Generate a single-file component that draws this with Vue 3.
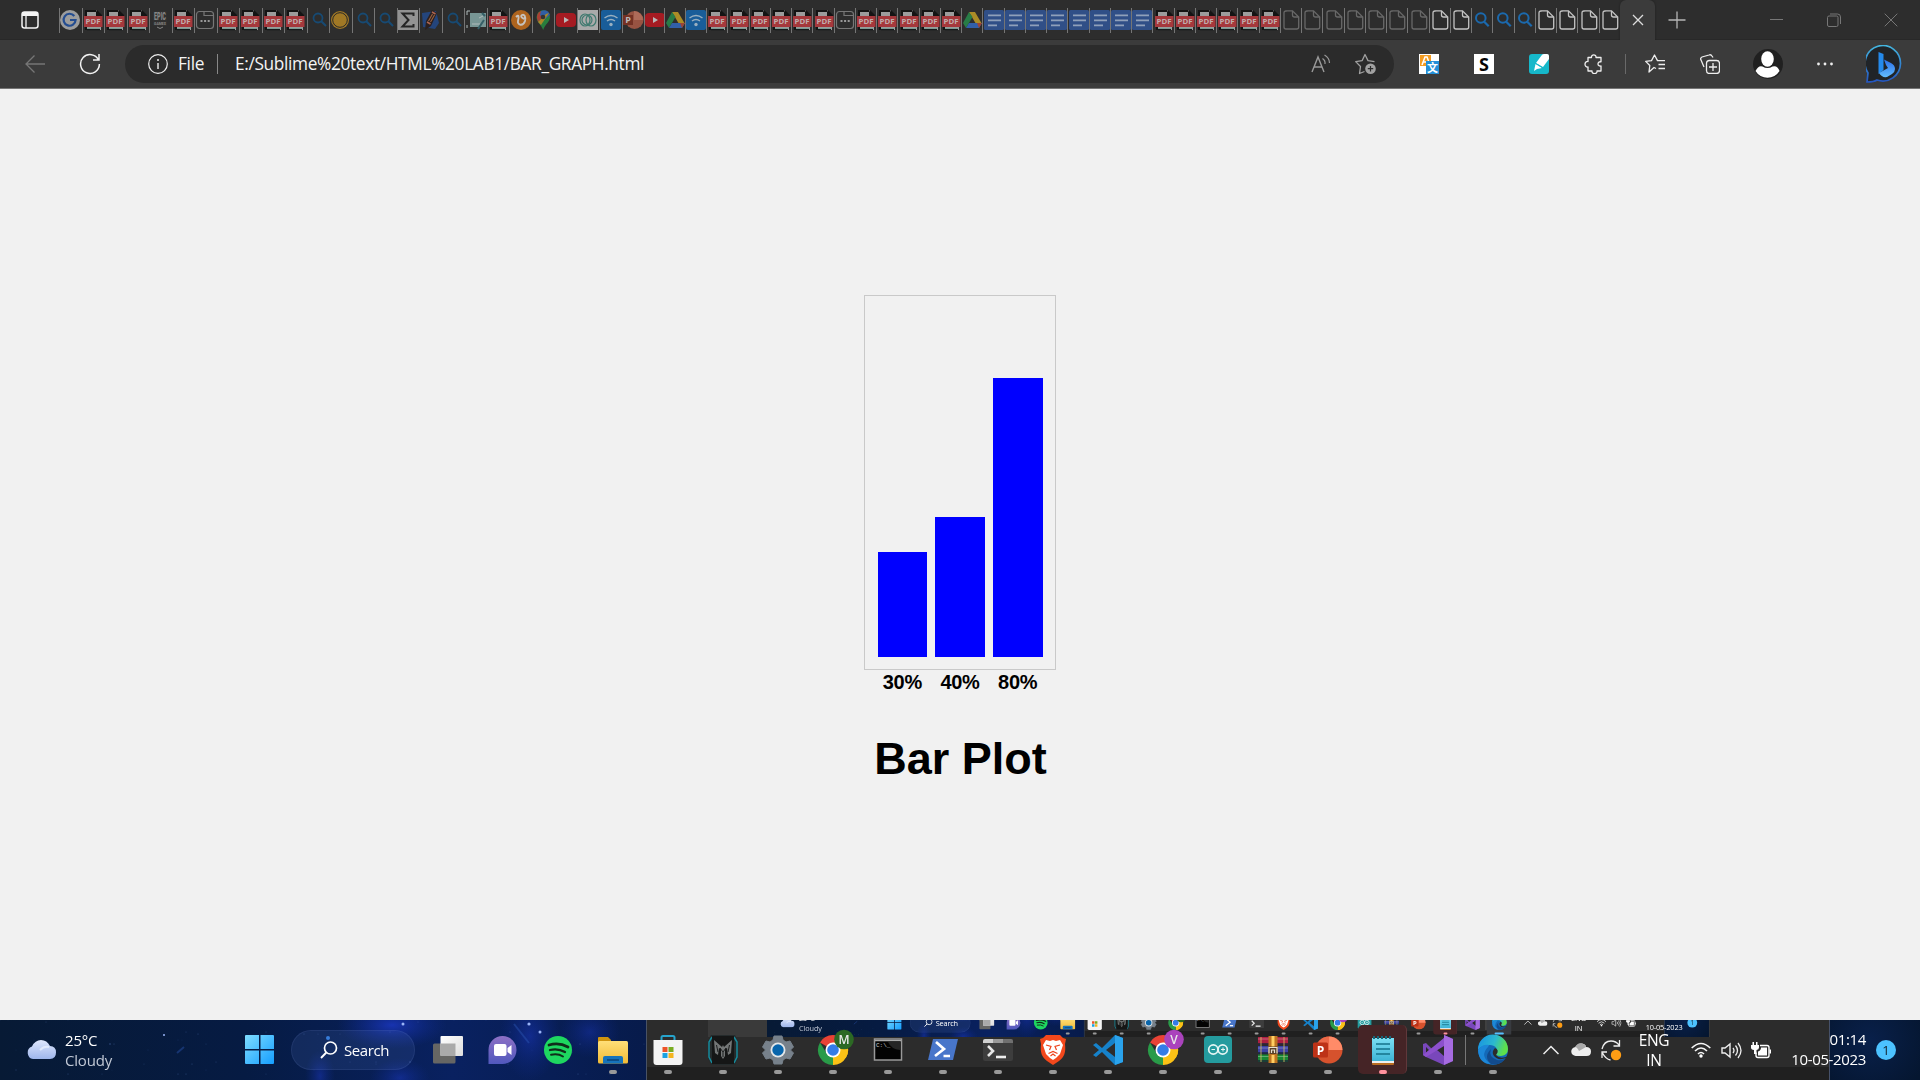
<script setup>
const icons = {
  pdf: '<path d="M3 0h10l5 5v15H3z" fill="#9c9c9c"/><path d="M2 0h11v2H4v18H2zM14 0l5 5v3h-2V6h-4V2z" fill="#141414"/><path d="M4 19.500h13" stroke="#15191b" stroke-width="1.500"/><path d="M4 18.300h13" stroke="#81aaa0" stroke-width=".8"/><rect x="1" y="6" width="18.500" height="11" fill="#a5383c"/><text x="2.600" y="14.200" textLength="15" lengthAdjust="spacingAndGlyphs" font-family="Open Sans,sans-serif" font-weight="700" font-size="7.500" fill="#c0adad">PDF</text>',
  google: '<circle cx="10" cy="10" r="10" fill="#9d9d9d"/><path d="M14.3 6A6 6 0 1 0 15.6 10H10" fill="none" stroke="#244d91" stroke-width="2.2"/>',
  epic: '<rect x="3" y="1" width="14" height="15" rx="1" fill="#303030"/><text x="4" y="10.300" textLength="12" lengthAdjust="spacingAndGlyphs" font-family="Roboto,sans-serif" font-weight="900" font-size="10.500" fill="#858585">EPIC</text><text x="4" y="15" textLength="12" lengthAdjust="spacingAndGlyphs" font-family="Roboto,sans-serif" font-weight="700" font-size="4" fill="#858585">GAMES</text><path d="M7 17l3 1.500 3-1.500" stroke="#858585" fill="none"/>',
  window: '<rect x="1.5" y="1.5" width="17" height="17" rx="3" fill="none" stroke="#777" stroke-width="1.2"/><path d="M9 2v3.5h9" fill="none" stroke="#777" stroke-width="1.2"/><path d="M5.5 11h2m1.6 0h2m1.6 0h2" stroke="#999" stroke-width="2"/>',
  search: '<circle cx="10" cy="8" r="4.5" fill="none" stroke="#174a73" stroke-width="1.8"/><path d="M13.3 11.3l4.7 4.7" stroke="#174a73" stroke-width="2"/>',
  searchOn: '<circle cx="8.8" cy="8" r="4.800" fill="none" stroke="#1b69ad" stroke-width="2"/><path d="M12.2 11.7l4.5 4.5" stroke="#1b69ad" stroke-width="2.200"/>',
  gold: '<circle cx="10" cy="10" r="9" fill="#a07825"/><circle cx="10" cy="10" r="7.300" fill="none" stroke="#282828" stroke-width="1"/>',
  sigma: '<path d="M0 0h20v20H0z" fill="#929292"/><path d="M15.500 6V3.500H4.500l6 6.500-6 6.500h11V14" fill="none" stroke="#252525" stroke-width="2"/>',
  pencil: '<path d="M1 3l14-2 3 12-4 6-12-2z" fill="#24457c"/><path d="M11 0l5 3-6 13-6 4 1-9z" fill="#2b2020"/><path d="M11 2l3.500 2M6 12l3.500 2" stroke="#ac6550" stroke-width="1.500"/><path d="M7.500 11l4-7M9.500 12l4-7" stroke="#9c6340" stroke-width="1.100"/>',
  teal: '<path d="M4 3h16v14H4z" fill="#789695"/><path d="M1 5V1h3M1 18v-3M6 14h8M13 8l4-2" stroke="#b0bbbb" fill="none"/><path d="M12 19l6-9M16 3l3 3" stroke="#355f67" stroke-width="2"/>',
  orange: '<circle cx="10" cy="10" r="10" fill="#ae641e"/><path d="M5 7c3-3 3 0 2 4s5 6 7 0c1-5-1-7-3-6s0 4 4 4" fill="none" stroke="#c7c3bf" stroke-width="1.9"/>',
  map: '<path d="M3.5 7A6.7 6.7 0 0 1 17 7c0 5-5 7-6.8 13C8.5 15 3.5 12 3.5 7z" fill="#287d3d"/><path d="M4 8A7 7 0 0 1 8 1l3 5-6 6z" fill="#a94035"/><path d="M8 1c4-2 8 0 9 4l-6 5-4-5z" fill="#315fa5"/><path d="M5 12l8-8 3-1-8 12z" fill="#a88528"/><circle cx="10" cy="7" r="2.3" fill="#343434"/>',
  yt: '<rect x="0" y="3" width="20" height="14" rx="4" fill="#a51b22"/><path d="M8 7l5 3-5 3z" fill="#b8b8b8"/>',
  rings: '<path d="M0 0h20v20H0z" fill="#aaa"/><g fill="none" stroke="#407a70" stroke-width="1.2"><ellipse cx="7" cy="10" rx="5" ry="6"/><ellipse cx="13" cy="10" rx="5" ry="6"/><ellipse cx="9" cy="10" rx="5" ry="5"/></g>',
  wifi: '<rect width="20" height="20" rx="2" fill="#195d99"/><path d="M3.5 8q6.5-5 13 0M6 11q4-3 8 0" fill="none" stroke="#9ab0c0" stroke-width="1.4"/><circle cx="10" cy="14.5" r="1.7" fill="#9ab0c0"/>',
  pptDim: '<circle cx="11.5" cy="10" r="9" fill="#985342"/><path d="M11 1a9 9 0 0 1 9 9h-9z" fill="#ae6b59"/><rect y="5" width="10" height="10" fill="#743124"/><text x="5" y="13" text-anchor="middle" font-size="9" font-family="Open Sans,sans-serif" font-weight="700" fill="#bbb">P</text>',
  drive: '<path d="M7 2h6l7 12h-6z" fill="#ab8c26"/><path d="M7 2l3.5 5L4 18 1 13z" fill="#287c46"/><path d="M4 18l3-5h13l-3 5z" fill="#315fa8"/><path d="M15 13h5l-3 5z" fill="#9d4434"/>',
  docs: '<rect width="20" height="20" rx="1.5" fill="#304f87"/><path d="M4 5.3h13M4 10.3h13M4 15.3h9" stroke="#8fa0ba" stroke-width="1.8"/>',
  page: '<path d="M5 .9h6.5l6.2 6.2V17q0 2-2 2H5q-2 0-2-2V3q0-2 2-2z" fill="none" stroke="#686868" stroke-width="1.3"/><path d="M11.5 1v4q0 2 2 2h4" fill="none" stroke="#686868" stroke-width="1.3"/>',
}
icons.pageOn = icons.page.replaceAll('#686868', '#c3c3c3')

const rep = (n, k) => Array(n).fill(k)
const tabs = [
  'google', ...rep(3, 'pdf'), 'epic', 'pdf', 'window', ...rep(4, 'pdf'), 'search', 'gold', 'search', 'search', 'sigma', 'pencil', 'search', 'teal', 'pdf', 'orange', 'map', 'yt', 'rings', 'wifi', 'pptDim',
  'yt', 'drive', 'wifi', ...rep(6, 'pdf'), 'window', ...rep(5, 'pdf'), 'drive', ...rep(8, 'docs'), ...rep(6, 'pdf'), ...rep(7, 'page'), 'pageOn', 'pageOn', ...rep(3, 'searchOn'), ...rep(4, 'pageOn'),
]
const tabClass = (i) => (i < 26 ? 'wide' : i === 26 ? 'narrow' : '')

const chrome = (l, c) =>
  `<path d="M15 15L2 7.5A15 15 0 0 1 28 7.5z" fill="#e94235"/><path d="M15 15L28 7.5A15 15 0 0 1 15 30z" fill="#fbc116"/><path d="M15 30A15 15 0 0 1 2 7.5L9 19l6 1z" fill="#299b48"/><path d="M15 7.5h13a15 15 0 0 1 0 15L15 30l6.5-11z" fill="#fbc116"/><circle cx="15" cy="15" r="7.5" fill="#fff"/><circle cx="15" cy="15" r="5.8" fill="#347ce8"/><circle cx="26" cy="4.5" r="9.8" fill="${c}"/><text x="26" y="8.700" text-anchor="middle" font-family="Open Sans,sans-serif" font-weight="600" font-size="12" fill="#e8e8e8">${l}</text>`

const apps = [
  { n: 'task', idle: 1, s: '<defs><linearGradient id="tv" x2="1" y2="1"><stop stop-color="#fff"/><stop offset="1" stop-color="#ddd"/></linearGradient></defs><rect y="8.5" width="22.5" height="20" rx="1.5" fill="#666664"/><rect x="7.5" y="1" width="22.5" height="20" rx="1" fill="url(#tv)"/><path d="M7.5 8.5h15V21h-15z" fill="#aaa"/>' },
  { n: 'chat', idle: 1, s: '<defs><linearGradient id="ch" x2="0" y2="1"><stop stop-color="#8d70c5"/><stop offset="1" stop-color="#5058bd"/></linearGradient></defs><path d="M.5 29V15A14 14 0 1 1 14 29z" fill="url(#ch)"/><rect x="6" y="9" width="12.5" height="12" rx="2" fill="#fff"/><path d="M19.500 13l4-3v10l-4-3z" fill="#fff"/>' },
  { n: 'spotify', idle: 1, s: '<circle cx="15" cy="15" r="14" fill="#1ed760"/><path d="M6 10q10-3 19 2" stroke="#102d1a" stroke-width="2.7" fill="none" stroke-linecap="round"/><path d="M7 15q8-2 15 2" stroke="#102d1a" stroke-width="2.3" fill="none" stroke-linecap="round"/><path d="M8 19.8q7-1.5 12 1.7" stroke="#102d1a" stroke-width="1.9" fill="none" stroke-linecap="round"/>' },
  { n: 'files', s: '<defs><linearGradient id="fo" x2="0" y2="1"><stop stop-color="#ffdf78"/><stop offset="1" stop-color="#f2bb36"/></linearGradient></defs><path d="M0 3q0-1 1-1h9l3 3v6H0z" fill="#cf940e"/><rect y="6" width="30" height="22.5" rx="1.5" fill="url(#fo)"/><path d="M5 28.5V23q0-2 2-2h16q2 0 2 2v5.500z" fill="#1673bb"/><path d="M9 25h12" stroke="#0a4278" stroke-width="1.5"/>' },
  { n: 'store', s: '<path d="M8.500 6V2.500q0-1.500 1.500-1.500h10q1.500 0 1.500 1.500V6" fill="none" stroke="#26a4cd" stroke-width="2"/><path d="M.5 5h29v22q0 3-3 3h-23q-3 0-3-3z" fill="#f4f4f4"/><path d="M9.500 12H14.500v5h-5z" fill="#ed5428"/><path d="M15.500 12h5v5h-5z" fill="#79ad22"/><path d="M9.500 18h5v5h-5z" fill="#1ba2e2"/><path d="M15.500 18h5v5h-5z" fill="#f4b51f"/>' },
  { n: 'predator', s: '<path d="M3 0h24l3 6v17l-3 7H3l-3-7V6z" fill="#252b2c"/><path d="M4 2L1 7v15l3 6M26 2l3 5v15l-3 6" fill="none" stroke="#168b9c" stroke-width="1.500"/><path d="M4 1h22v28H4z" fill="#151616"/><path d="M6 5l8 7 1-2 1 2 8-7-1 13-3 2-1-7-2 1v7l-2 3-2-3v-7l-2-1-1 7-3-2z" fill="#737676"/><path d="M8.500 10l1.500 7M21.500 10L20 17M12 13l3 4 3-4M15 17v5" stroke="#1b1d1d" stroke-width="1" fill="none"/>' },
  { n: 'settings', s: '<path d="M11 1h8l1 4 3 2 4-1 3.500 6-3 3 3 3-3.500 6-4-1-3 2-1 4h-8l-1-4-3-2-4 1-3.500-6 3-3-3-3 3.500-6 4 1 3-2z" fill="#77818b" stroke="#77818b" stroke-linejoin="round"/><circle cx="15" cy="15" r="7.500" fill="#e4e7e9"/><circle cx="15" cy="15" r="5.700" fill="#0865ac"/>' },
  { n: 'chromeM', s: chrome('M', '#2c6924') },
  { n: 'cmd', s: '<rect x="1.500" y="4" width="27" height="21" fill="#030303" stroke="#999" stroke-width="1.500"/><path d="M2 5.500h26" stroke="#aaa" stroke-width="1.500"/><path d="M15 7h12v8q-9-1-12-8" fill="#252525"/><text x="3" y="11.500" font-family="Liberation Mono,monospace" font-size="6" fill="#ccc">C:\\_</text>' },
  { n: 'powershell', s: '<path d="M5 4h25l-5 21H0z" fill="#4876ca"/><path d="M8 7l8 7-9 7" fill="none" stroke="#fff" stroke-width="2.700"/><path d="M15.500 21H22" stroke="#fff" stroke-width="2.500"/>' },
  { n: 'terminal', s: '<rect y="4" width="30" height="22" rx="2" fill="#3d3d3d"/><path d="M0 8V6q0-2 2-2h8v4z" fill="#d0d0d0"/><path d="M10 4h10v4H10z" fill="#999"/><path d="M20 4h8q2 0 2 2v2H20z" fill="#707070"/><path d="M5 11l5 5-5 5" fill="none" stroke="#e7e7e7" stroke-width="2.600"/><path d="M13 22h10" stroke="#eee" stroke-width="2.600"/>' },
  { n: 'brave', s: '<path d="M8 0h14l3 3 3 1-1 5c1 9-1 13-6 17l-6 4-6-4C4 22 2 18 3 9L2 4l3-1z" fill="#f3481c"/><path d="M8 5l4 1 3-1 3 1 4-1 3 5-3 9-4 4-3 2-3-2-4-4-3-9z" fill="#fff"/><path d="M8 10l5 1.500-1.500 3.500M22 10l-5 1.500 1.500 3.500M10.500 18.500l4.500-2 4.500 2M12.500 21l2.500-2 2.500 2" fill="none" stroke="#ed421b" stroke-width="1.200"/>' },
  { n: 'code', s: '<path d="M22 0l8 3v24l-8 3L9 17l-6 5-3-2 6-5-6-5 3-2 6 5z" fill="#1682ca"/><path d="M22 0l8 3v24l-8 3z" fill="#2aa3ec"/><path d="M22 8l-9 7 9 7z" fill="#2d2d2d"/>' },
  { n: 'chromeV', s: chrome('V', '#aa43bc') },
  { n: 'arduino', s: '<rect x="1" y="1" width="28" height="27" rx="4" fill="#249b9e"/><g fill="none" stroke="#e5f5f4" stroke-width="1.700"><circle cx="10.300" cy="14.500" r="4.600"/><circle cx="19.700" cy="14.500" r="4.600"/></g><path d="M8.500 14.500h3.500M18 14.500h4M20 12.500v4" stroke="#e5f5f4"/>' },
  { n: 'winrar', s: '<path d="M0 2h30v7.500H0z" fill="#ad2042"/><path d="M0 11h30v7.500H0z" fill="#3c41a5"/><path d="M0 19.500h30V27H0z" fill="#188834"/><path d="M0 4h30M0 13h30M0 21.500h30" stroke="#fff" opacity=".3"/><path d="M0 9h30M0 18h30M0 26h30" stroke="#1b2639" stroke-width="1.300"/><path d="M3 2v25M26 2v25" stroke="#d9bd62" stroke-width="1.500" opacity=".55"/><rect x="10.500" y="1" width="9" height="27" fill="#bd7321"/><path d="M15 1v11M15 20v8" stroke="#ffce62" stroke-width="3"/><rect x="10.500" y="11.500" width="9" height="7.500" fill="#594128"/><path d="M11 18.500v-6h8v6M13.500 18v-3h3v3" fill="none" stroke="#e8e0d0" stroke-width="1.200"/>' },
  { n: 'powerpoint', s: '<circle cx="16" cy="15" r="13.500" fill="#d6522d"/><path d="M16 1.500A13.500 13.500 0 0 1 29.500 15H16z" fill="#ff8b68"/><path d="M2.500 15A13.500 13.500 0 0 1 16 1.500V15z" fill="#ec6948"/><rect y="7.500" width="15" height="15" rx="1.500" fill="#bd3217"/><text x="7.500" y="19.500" text-anchor="middle" font-family="Open Sans,sans-serif" font-weight="700" font-size="12" fill="#fff">P</text>' },
  { n: 'notepad', hot: 1, s: '<defs><linearGradient id="np" x2="0" y2="1"><stop stop-color="#7bdff3"/><stop offset="1" stop-color="#3eb4d5"/></linearGradient></defs><rect x="4" y="26" width="22" height="4" rx="1" fill="#b86c21"/><path d="M4 3h22v25H4z" fill="#eee"/><path d="M4 3h22v23H4z" fill="url(#np)"/><path d="M8 9h14M8 14h14M8 19h14" stroke="#14738a" stroke-width="1.700"/><path d="M6 1v3M10 1v3M14 1v3M18 1v3M22 1v3" stroke="#176679" stroke-width="2"/>' },
  { n: 'studio', s: '<path d="M21 0l9 4v22l-9 4L3 22 0 20V9l3-1 7 7 11-12z" fill="#7947bb"/><path d="M21 0l9 4v22l-9 4z" fill="#a66be1"/><path d="M3 12v6l3-3zM21 9l-7 6 7 6z" fill="#2b2b2b"/><path d="M0 20l21-17v8L3 22z" fill="#8c50cc"/>' },
]
const edge = '<defs><linearGradient id="ed" x2="1" y2=".3"><stop stop-color="#178fe4"/><stop offset=".6" stop-color="#2cb9cf"/><stop offset="1" stop-color="#5ee04b"/></linearGradient></defs><circle cx="15" cy="15" r="15" fill="#1469b7"/><path d="M0 15A15 15 0 0 1 30 14q0 6-7 7-6 0-5-3c3-4-1-8-6-8Q3 10 0 15z" fill="url(#ed)"/><path d="M10 12q-9 9 3 17Q1 29 0 15q4-6 11-5z" fill="#1c87d8"/><path d="M13 14q-3 8 6 11 5 1 9-2-6 8-15 6-8-7 0-15z" fill="#124b8d"/><path d="M17 13q5 2 1 7 3 4 10 2l2-1-2 2q-8 3-12-2-3-4 1-8z" fill="#2b2b2b"/>'

const stars = Array.from({ length: 60 }, (_, i) => ({ x: (i * 137 + i * i * 11) % 646, y: (i * 23 + i * i * 7) % 60, r: i % 13 === 0 ? 0.8 : 0.5, o: 0.12 + (i % 5) * 0.08 }))
const bars = [
  { v: 30, h: 105, w: 49 },
  { v: 40, h: 140, w: 50 },
  { v: 80, h: 279, w: 50 },
]
</script>

<template>
  <div class="screen">
    <header class="tabstrip">
      <svg class="workspace" width="18" height="18" viewBox="0 0 18 18"><rect x="1" y="1" width="16" height="16" rx="2.500" fill="none" stroke="#f4f4f4" stroke-width="1.500" /><path d="M1 5V3q0-2 2-2h12q2 0 2 2v2z" fill="#f4f4f4" /><path d="M5 4v13" stroke="#f4f4f4" stroke-width="1.300" /></svg>
      <div class="tabs">
        <div v-for="(t, i) in tabs" :key="i" class="tab" :class="tabClass(i)"><svg width="20" height="20" viewBox="0 0 20 20" v-html="icons[t]"></svg></div>
      </div>
      <div class="active-tab"><svg width="12" height="12" viewBox="0 0 12 12"><path d="M1 1l10 10M11 1L1 11" stroke="#ddd" stroke-width="1.300" /></svg></div>
      <svg class="newtab" width="18" height="18" viewBox="0 0 18 18"><path d="M9 .5v17M.5 9h17" stroke="#b5b5b5" stroke-width="1.300" /></svg>
      <div class="wincontrols">
        <svg width="14" height="14" viewBox="0 0 14 14"><path d="M0 6.500h13" stroke="#777" /></svg>
        <svg width="14" height="14" viewBox="0 0 14 14"><rect x=".5" y="3" width="10.500" height="10.500" rx="1.500" fill="none" stroke="#777" /><path d="M3 1h7.500q3 0 3 3v7" fill="none" stroke="#777" /></svg>
        <svg width="14" height="14" viewBox="0 0 14 14"><path d="M.7.7l12.600 12.600M13.300.7L.7 13.300" stroke="#777" /></svg>
      </div>
    </header>

    <nav class="toolbar">
      <svg class="back" width="20" height="18" viewBox="0 0 20 18"><path d="M20 9H1M9.500.5L1 9l8.500 8.500" fill="none" stroke="#767676" stroke-width="1.300" /></svg>
      <svg class="reload" width="22" height="22" viewBox="0 0 22 22"><path d="M19.500 7A9.400 9.400 0 1 0 20.400 11M20 1v6h-6" fill="none" stroke="#f2f2f2" stroke-width="1.500" /></svg>
      <div class="address">
        <svg class="info" width="20" height="20" viewBox="0 0 20 20"><circle cx="10" cy="10" r="9.300" fill="none" stroke="#eee" stroke-width="1.200" /><path d="M10 9v6" stroke="#eee" stroke-width="1.400" /><circle cx="10" cy="6" r="1" fill="#eee" /></svg>
        <span class="scheme">File</span><i class="rule"></i><span class="url">E:/Sublime%20text/HTML%20LAB1/BAR_GRAPH.html</span>
        <svg class="read" width="20" height="20" viewBox="0 0 20 20"><path d="M1 18L7 3l6 15M3 13h8" fill="none" stroke="#999" stroke-width="1.400" /><path d="M11.500 4.500q3 2 2.500 5.500M13.500 1q5 3 5 8" fill="none" stroke="#999" stroke-width="1.200" /></svg>
        <svg class="fav" width="22" height="22" viewBox="0 0 22 22"><path d="M9.500 18.500l-5 2 1-7L.7 8.600l6.500-1L10 1.500l3 6.100 6.500 1" fill="none" stroke="#a1a1a1" stroke-width="1.300" stroke-linejoin="round" /><circle cx="15.500" cy="15.700" r="5.300" fill="#a1a1a1" /><path d="M15.500 13v5.500M12.800 15.700h5.400" stroke="#2b2b2b" stroke-width="1.200" /></svg>
      </div>
      <div class="extensions">
        <svg width="20" height="20" viewBox="0 0 20 20"><path d="M0 0h20v20H0z" fill="#fff" /><path d="M1 1h11v11H1z" fill="#f39b20" /><path d="M3 11l3-8h2l3 8M4 8h6" fill="none" stroke="#fff" stroke-width="1.500" /><path d="M7 7h13v13H7z" fill="#238fd7" /><text x="13.500" y="17.500" text-anchor="middle" font-family="Noto Sans CJK SC,sans-serif" font-weight="700" font-size="11" fill="#fff">文</text></svg>
        <svg width="20" height="20" viewBox="0 0 20 20"><path d="M0 0h20v20H0z" fill="#fff" /><text x="10" y="16.500" text-anchor="middle" font-family="Noto Sans,sans-serif" font-weight="700" font-size="18" fill="#050505">S</text></svg>
        <svg width="20" height="20" viewBox="0 0 20 20"><rect width="20" height="20" rx="3" fill="#16b8ca" /><path d="M12.500 1.500Q13 0 15 0h3q2 0 2 2v3l-6 8-7-4z" fill="#fff" /><path d="M6.500 10l6.500 4-5 1-3 2z" fill="#fff" /><path d="M6 9l8 5" stroke="#16b8ca" stroke-width=".8" /></svg>
        <svg width="20" height="20" viewBox="0 0 20 20"><path d="M4 3.500h3.500c-.5-3.500 5-3.500 4.500 0h5v4.300c-4-.7-4 4.900 0 4.200v5h-4c.5 3.500-5.500 3.500-5 0H4v-4c-4 .5-4-6 0-5.500z" fill="none" stroke="#eee" stroke-width="1.300" stroke-linejoin="round" /></svg>
      </div>
      <i class="divider"></i>
      <div class="actions">
        <svg width="21" height="20" viewBox="0 0 21 20"><path d="M11 14.500l-2-1-5 4.500.8-6.500L.7 7.400l5.800-.8L9.500 1l3 5.600H20M13.500 10.500H20M13.500 14.500H20" fill="none" stroke="#eee" stroke-width="1.300" stroke-linejoin="round" /></svg>
        <svg width="20" height="20" viewBox="0 0 20 20"><rect x="6.500" y="6.500" width="13" height="13" rx="3" fill="none" stroke="#eee" stroke-width="1.300" /><path d="M13 9v8M9 13h8M4 13L1 6q-1-2 1-3L9 1q2-.8 3 1l1 1.500" fill="none" stroke="#eee" stroke-width="1.300" /></svg>
        <svg class="profile" width="30" height="30" viewBox="0 0 30 30"><circle cx="15" cy="15" r="15" fill="#202020" /><ellipse cx="14.500" cy="10" rx="6.300" ry="7.700" fill="#fff" /><path d="M2.500 22q3-6 7-4.500 5 3 10 0 5-1.500 7 4.500a14 14 0 0 1-24 0z" fill="#fff" /></svg>
        <svg width="18" height="6" viewBox="0 0 18 6"><g fill="#eee"><circle cx="2.500" cy="3" r="1.400" /><circle cx="9" cy="3" r="1.400" /><circle cx="15.500" cy="3" r="1.400" /></g></svg>
        <svg class="bing" width="38" height="38" viewBox="0 0 38 38"><defs><linearGradient id="bingline" x2="0" y2="1"><stop stop-color="#44b6df" /><stop offset="1" stop-color="#2455bf" /></linearGradient><linearGradient id="bingb" x2="0" y2="1"><stop stop-color="#2b6fe8" /><stop offset="1" stop-color="#62bcff" /></linearGradient></defs><path d="M1 37l1-9a17.700 17.700 0 1 1 9 7q-3 2-10 2z" fill="#202428" stroke="url(#bingline)" stroke-width="1.700" /><path d="M12.500 7l5 2v16l-5 4z" fill="#248aec" /><path d="M18 14.500l7 3.500q4 2 4 6 0 3-3 5l-5 3q-5 1-8-4l9-5-2-3z" fill="url(#bingb)" /></svg>
      </div>
    </nav>

    <main class="page">
      <div class="chart">
        <div v-for="b in bars" :key="b.v" class="bar" :style="{ height: b.h + 'px', width: b.w + 'px' }"></div>
      </div>
      <div class="labels"><span v-for="b in bars" :key="b.v">{{ b.v }}%</span></div>
      <h1>Bar Plot</h1>
    </main>

    <footer class="dock">
      <div v-for="kind in ['main', 'mini']" :key="kind" class="clip" :class="kind">
        <div class="taskbar">
          <svg class="sky" width="646" height="60" viewBox="0 0 646 60">
            <defs>
              <linearGradient id="skyfill"><stop stop-color="#071a35" /><stop offset=".38" stop-color="#061b43" /><stop offset=".7" stop-color="#092160" /><stop offset="1" stop-color="#071b4b" /></linearGradient>
              <radialGradient id="glow"><stop stop-color="#203ee0" stop-opacity=".65" /><stop offset="1" stop-color="#1230ad" stop-opacity="0" /></radialGradient>
            </defs>
            <path d="M0 0h646v60H0z" fill="url(#skyfill)" />
            <ellipse cx="392" cy="5" rx="55" ry="24" fill="url(#glow)" /><ellipse cx="320" cy="56" rx="15" ry="26" fill="url(#glow)" opacity=".6" /><ellipse cx="400" cy="58" rx="30" ry="20" fill="url(#glow)" opacity=".6" /><ellipse cx="530" cy="16" rx="30" ry="45" fill="url(#glow)" opacity=".6" /><ellipse cx="590" cy="12" rx="30" ry="26" fill="url(#glow)" opacity=".5" />
            <circle v-for="(s, i) in stars" :key="i" :cx="s.x" :cy="s.y" :r="s.r" fill="#7092df" :opacity="s.o" />
            <g fill="#9ab4f7"><circle cx="403" cy="4" r="1.500" /><circle cx="328" cy="18" r="2" fill="#317fe0" /><circle cx="164" cy="15" r="1" /><circle cx="529" cy="4" r="1.600" /><circle cx="540" cy="12" r="1.500" /></g>
            <path d="M514 4l15 19M177 33l7-6" stroke="#2e5bbb" stroke-width="2" opacity=".4" />
          </svg>
          <div class="dark"></div>
          <div class="content">
            <svg class="weather" width="31" height="20" viewBox="0 0 31 20"><defs><linearGradient id="cl" x2="0" y2="1"><stop stop-color="#dfe7fc" /><stop offset="1" stop-color="#9eb6ec" /></linearGradient></defs><path d="M7 19a6.500 6.500 0 0 1-1-12.500Q9 0 15 0t9 6q6 0 6 6.500T24 19z" fill="url(#cl)" /><path d="M14 10q4-4 9-3" stroke="#eef4ff" fill="none" stroke-width="2" opacity=".7" /></svg>
            <div class="temp"><span>25°C</span><span class="sub">Cloudy</span></div>
            <svg class="start" width="30" height="30" viewBox="0 0 30 30"><defs><linearGradient id="win" x2="1" y2="1"><stop stop-color="#7fddff" /><stop offset="1" stop-color="#159eff" /></linearGradient></defs><path d="M1 0h13v14H0V1q0-1 1-1zM15.500 0H28q1 0 1 1v13H15.500zM0 15.500h14V29H1q-1 0-1-1zM15.500 15.500H29V28q0 1-1 1H15.500z" fill="url(#win)" /></svg>
            <div class="search"><svg width="18" height="18" viewBox="0 0 18 18"><circle cx="10.500" cy="7" r="6" fill="none" stroke="#fff" stroke-width="1.700" /><path d="M6.300 11.500L1 17" stroke="#fff" stroke-width="1.900" /></svg><span>Search</span></div>
            <div class="apps">
              <div v-for="a in apps" :key="a.n" class="app" :class="{ hot: a.hot, idle: a.idle }"><svg width="30" height="30" viewBox="0 0 30 30" v-html="a.s"></svg><i></i></div>
              <div class="app edge"><svg width="30" height="30" viewBox="0 0 30 30" v-html="edge"></svg><i></i></div>
            </div>
            <svg class="chevron" width="16" height="10" viewBox="0 0 16 10"><path d="M.5 9L8 1.500 15.500 9" fill="none" stroke="#eee" stroke-width="1.500" /></svg>
            <svg class="drivecloud" width="20" height="14" viewBox="0 0 20 14"><path d="M5 13a4.500 4.500 0 0 1-.5-9Q7 0 11 .5T15 4q5 0 5 4.500T15.500 13z" fill="#eee" /><path d="M4 4q3-5 7-3.500T15 4l-7 4Q6 4 4 4z" fill="#aaa" /></svg>
            <svg class="sync" width="21" height="21" viewBox="0 0 21 21"><path d="M1 9Q3 1 10 1q5 0 8 4M18.500 0v6h-6M1 18v-6h5M1.500 13q3 6 8 7" fill="none" stroke="#eee" stroke-width="1.300" /><circle cx="15" cy="15" r="5.200" fill="#ff9d14" /></svg>
            <div class="lang"><span>ENG</span><span>IN</span></div>
            <svg class="net" width="20" height="16" viewBox="0 0 20 16"><path d="M.7 6q9.300-9 18.600 0M4 9q6-6 12 0M7 12q3-3 6 0" fill="none" stroke="#f5f5f5" stroke-width="1.600" /><circle cx="10" cy="14" r="1.700" fill="#fff" /></svg>
            <svg class="vol" width="21" height="17" viewBox="0 0 21 17"><path d="M1 6h3l5-4v13l-5-4H1z" fill="none" stroke="#eee" stroke-width="1.400" /><path d="M12 6q2 2.500 0 5M14.500 3.500q4 5 0 10M17 1q6 7.500 0 15" fill="none" stroke="#eee" stroke-width="1.300" /></svg>
            <svg class="bat" width="21" height="17" viewBox="0 0 21 17"><path d="M9 3.500h7q2 0 2 2v8q0 2-2 2H7q-2 0-2-2v-3" fill="none" stroke="#fff" stroke-width="1.400" /><path d="M10 5.500h6v8H7v-4q3-1 3-4zM18.500 7.500H20v4h-1.500z" fill="#fff" /><path d="M0 3h8v2.500q0 2-2.500 2.500v4H3V8Q0 7.500 0 5.500zM1.500 0H3v3H1.500zM5 0h1.500v3H5z" fill="#fff" /></svg>
            <div class="clock"><span>01:14</span><span class="date">10-05-2023</span></div>
            <div class="badge">1</div>
          </div>
        </div>
      </div>
    </footer>
  </div>
</template>

<style>
body { margin: 0; overflow: hidden; }
</style>
<style scoped>
.screen { width: 1920px; height: 1080px; display: flex; flex-direction: column; background: #f1f1f1; font-family: "Open Sans", "Noto Sans", sans-serif; overflow: hidden; }
svg { flex: none; display: block; }
.tabstrip { height: 40px; flex: none; background: #2d2d2d; display: flex; align-items: center; box-shadow: inset 0 -1px #282828; }
.workspace { margin-left: 21px; margin-right: 20px; }
.tabs { width: 1561px; display: flex; flex: none; }
.tab { box-sizing: border-box; width: 21.250px; height: 25px; border-left: 1px solid #757575; display: flex; align-items: center; justify-content: center; flex: none; }
.tab svg { overflow: visible; }
.tab.wide { width: 22.530px; padding-right: 1px; }
.tab.narrow { width: 19.300px; }
.active-tab { width: 35px; height: 40px; border-radius: 6px 6px 0 0; background: #3b3b3b; display: flex; align-items: center; justify-content: center; flex: none; box-shadow: 0 0 2px #1d1d1d; }
.newtab { margin-left: 13px; }
.wincontrols { display: flex; gap: 43px; margin-left: 84px; }
.toolbar { height: 48px; flex: none; background: #3b3b3b; border-bottom: 1px solid #757575; display: flex; align-items: center; }
.back { margin-left: 25px; }
.reload { margin-left: 34px; }
.address { width: 1269px; height: 38px; border-radius: 19px; margin-left: 24px; background: #2b2b2b; display: flex; align-items: center; flex: none; color: #f4f4f4; font-size: 17.300px; white-space: nowrap; }
.info { margin-left: 23px; }
.scheme { width: 39px; margin-left: 10px; letter-spacing: -.3px; padding-bottom: 2px; }
.rule { width: 1px; height: 20px; background: #888; }
.url { width: 409px; margin-left: 17px; letter-spacing: -.350px; padding-bottom: 2px; }
.read { margin-left: 667px; }
.fav { margin-left: 24px; }
.extensions { display: flex; gap: 35px; margin-left: 25px; }
.divider { width: 1px; height: 20px; background: #696969; margin-left: 21px; flex: none; }
.actions { display: flex; align-items: center; margin-left: 19px; }
.actions svg + svg { margin-left: 34px; }
.actions .profile { margin-left: 33px; }
.actions .profile + svg { margin-left: 33px; }
.actions .bing { margin-left: 32px; }
.page { height: 931px; flex: none; display: flex; flex-direction: column; align-items: center; font-family: "Liberation Sans", Arial, sans-serif; color: #000; background: #f1f1f1; }
.chart { margin-top: 206px; width: 192px; height: 375px; box-sizing: border-box; border: 1px solid #c9c9c9; display: flex; align-items: flex-end; justify-content: flex-start; gap: 8px; padding: 0 12px 12px 13px; }
.bar { background: #00f; flex: none; }
.labels { display: flex; width: 173px; justify-content: space-between; height: 24px; line-height: 24px; font-size: 20px; font-weight: bold; }
.labels span { width: 57.670px; text-align: center; letter-spacing: -.3px; }
h1 { margin: 39px 0 0 1px; font-size: 45px; line-height: 52px; height: 52px; }
.dock { position: relative; height: 60px; flex: none; overflow: hidden; }
.clip.mini { position: absolute; z-index: 1; left: 708px; top: 0; width: 1002px; height: 17px; overflow: hidden; background: #3a3a3a; }
.clip.mini .taskbar { position: absolute; left: 59px; top: -12.500px; transform: scale(.4906); transform-origin: 0 0; }
.taskbar { position: relative; width: 1920px; height: 60px; background: radial-gradient(circle at 1870px 20px, #09204a, #051630 60px); overflow: hidden; }
.sky { position: absolute; left: 0; top: 0; }
.dark { position: absolute; left: 646px; top: 0; width: 1184px; height: 60px; box-sizing: border-box; background: linear-gradient(#2c2c2c 47px, #202020 47px); border-left: 1px solid #495264; border-right: 1px solid #465169; }
.content { position: relative; z-index: 2; height: 60px; display: flex; align-items: center; color: #fff; }
.weather { margin-left: 26px; }
.temp { width: 171px; margin-left: 8px; display: flex; flex-direction: column; font-size: 15px; line-height: 20px; letter-spacing: -.2px; }
.temp .sub { color: #c1c8d5; }
.start { margin-left: 9px; }
.search { width: 124px; height: 40px; box-sizing: border-box; border-radius: 20px; background: rgba(90, 120, 190, .16); border: 1px solid rgba(120, 150, 210, .12); margin-left: 16px; padding-left: 28px; display: flex; align-items: center; gap: 6px; font-size: 15px; letter-spacing: -.4px; flex: none; }
.apps { display: flex; margin-left: 5px; }
.app { width: 55px; height: 60px; position: relative; display: flex; align-items: center; justify-content: center; flex: none; }
.app svg { overflow: visible; position: relative; }
.app i { position: absolute; left: 23.500px; top: 50px; width: 8px; height: 4px; border-radius: 2px; background: #999; }
.app.idle i { display: none; }
.app.hot::before { content: ""; position: absolute; left: 3px; top: 5px; width: 48px; height: 49px; border-radius: 5px; background: #452426; border-right: 1px solid #60383b; }
.app.hot i { background: #ff929e; }
.edge::before { content: ""; position: absolute; left: 0; top: 15px; width: 1px; height: 30px; background: #777; }
.mini .edge { background: linear-gradient(#383b40, #383b40) 2px 6px / 50px 48px no-repeat; }
.mini .edge i { left: 18px; width: 19px; background: #56bfff; }
.chevron { margin-left: 23px; }
.drivecloud { margin-left: 12px; }
.sync { margin-left: 10px; }
.lang { width: 40px; margin-left: 12px; display: flex; flex-direction: column; text-align: center; line-height: 20px; font-size: 15.500px; letter-spacing: -.3px; flex: none; }
.net { margin-left: 17px; }
.vol { margin-left: 10px; }
.bat { margin-left: 9px; }
.clock { width: 94px; display: flex; flex-direction: column; text-align: right; font-size: 15px; line-height: 20px; letter-spacing: -.350px; flex: none; margin-top: -2px; }
.badge { width: 20px; height: 20px; border-radius: 50%; background: #4cc2ff; color: #12212c; font-size: 13px; line-height: 20px; text-align: center; margin-left: 10px; flex: none; }
</style>
